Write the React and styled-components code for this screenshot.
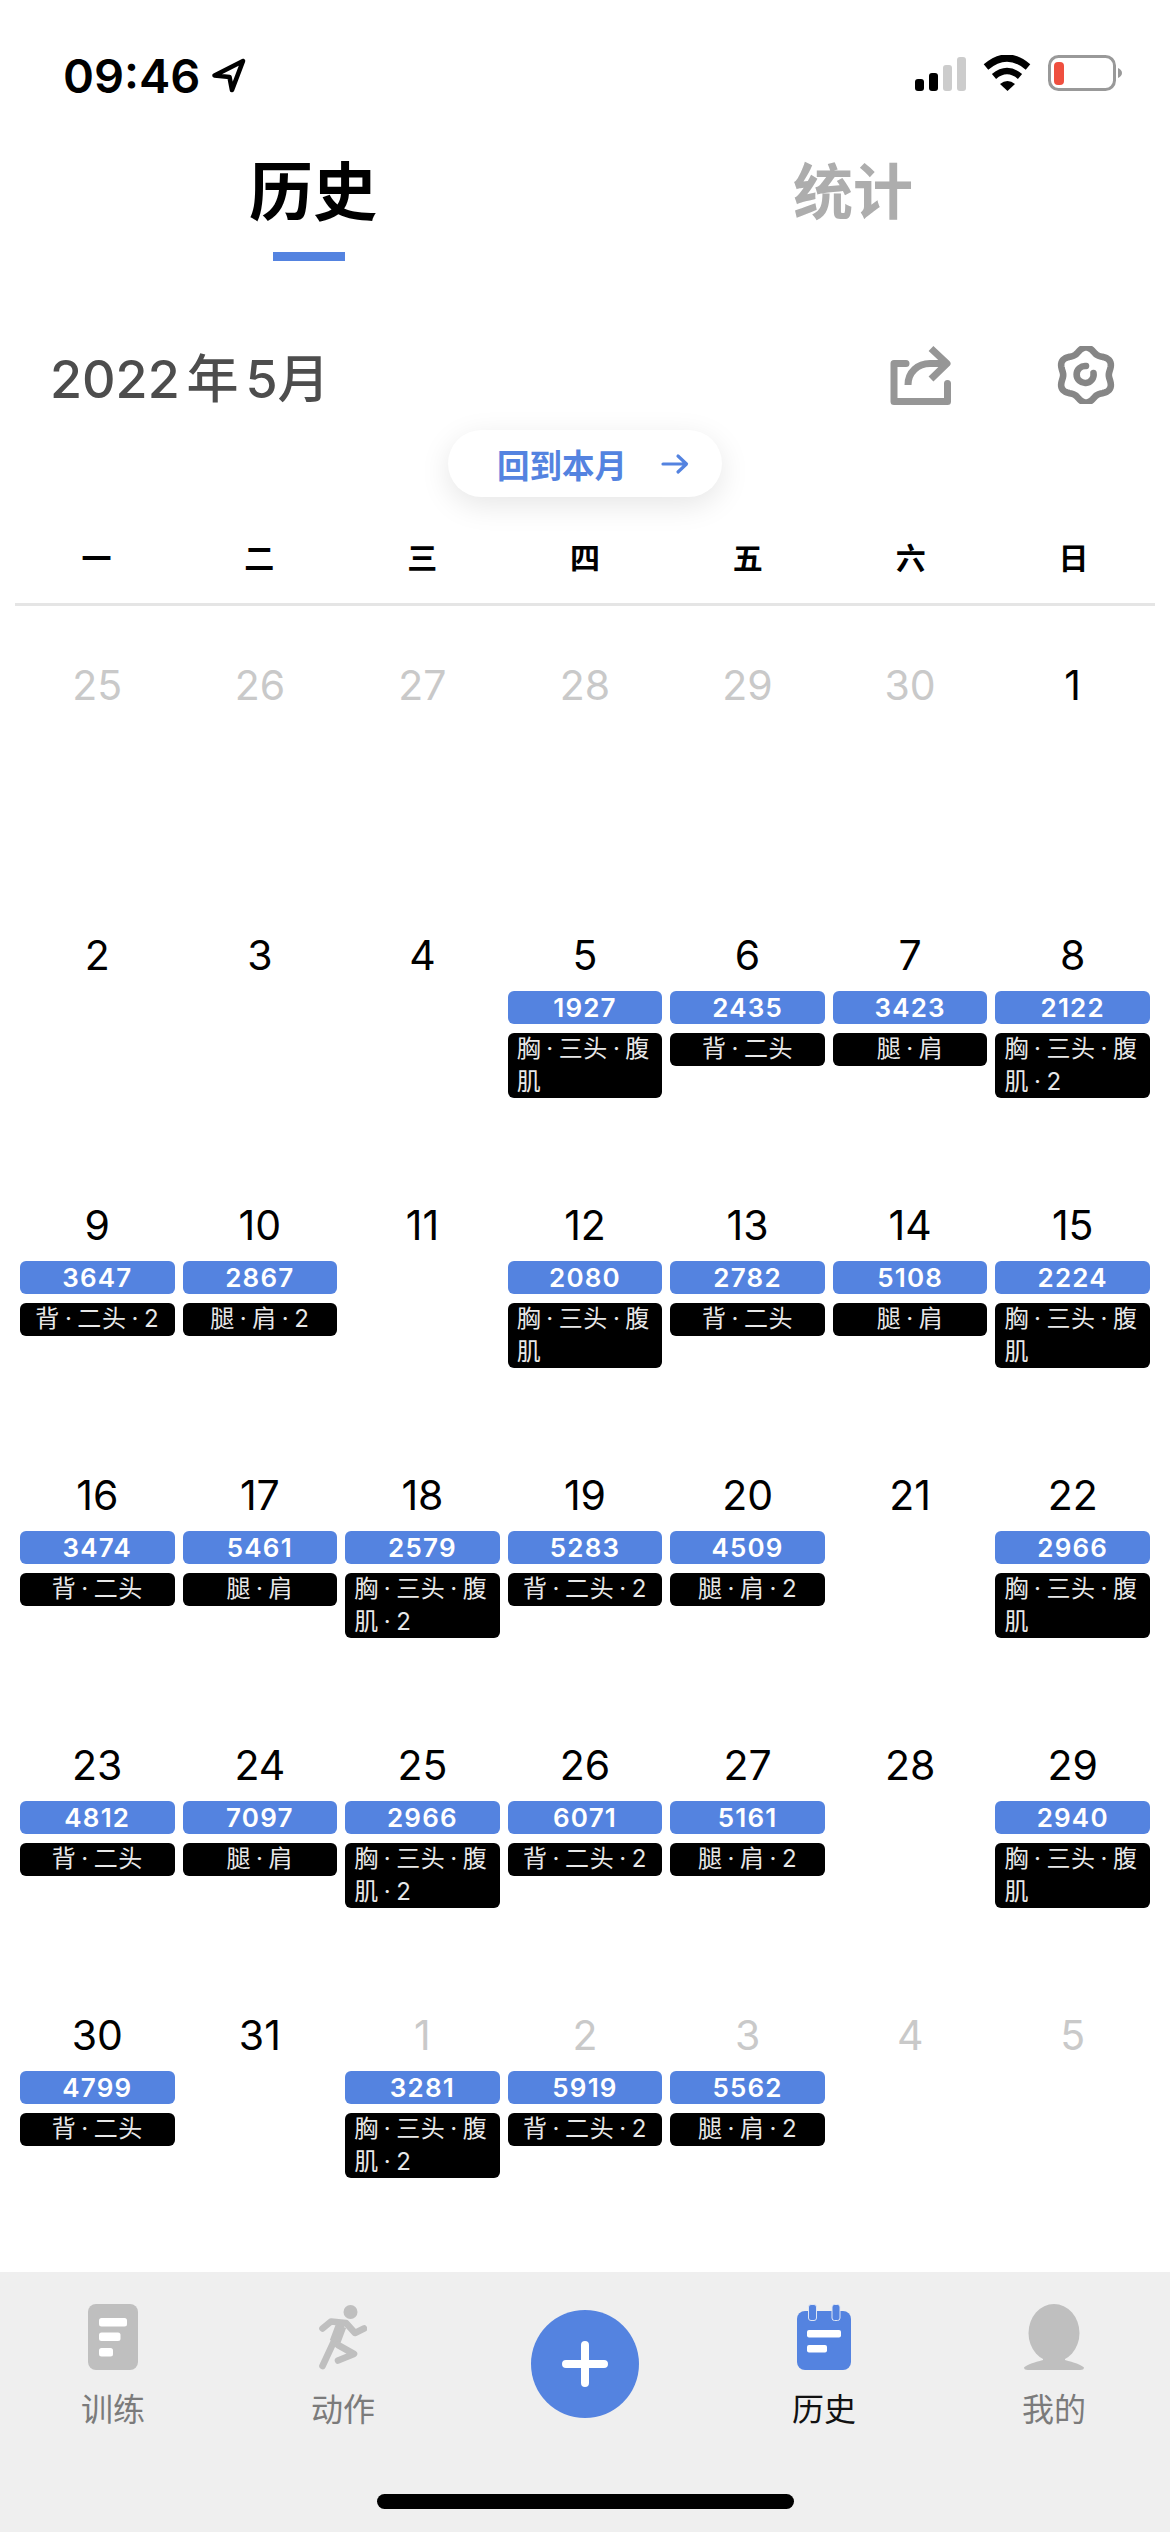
import React from 'react';
import styled, { createGlobalStyle } from 'styled-components';

const BLUE = '#5483e0';

const GlobalStyle = createGlobalStyle`
    html, body {
        margin: 0;
        padding: 0;
        background: #fff;
    }
    body {
        font-family: Inter, "Noto Sans CJK SC", sans-serif;
    }
`;

const CHEST = '胸\u2009·\u2009三头\u2009·\u2009腹肌';
const BACK = '背\u2009·\u2009二头';
const LEGS = '腿\u2009·\u2009肩';
const twice = (label) => `${label}\u2009·\u20092`;

const days = [
    { day: 25, muted: true }, { day: 26, muted: true }, { day: 27, muted: true }, { day: 28, muted: true },
    { day: 29, muted: true }, { day: 30, muted: true }, { day: 1 },
    { day: 2 }, { day: 3 }, { day: 4 },
    { day: 5, kcal: 1927, label: CHEST }, { day: 6, kcal: 2435, label: BACK }, { day: 7, kcal: 3423, label: LEGS },
    { day: 8, kcal: 2122, label: twice(CHEST) },
    { day: 9, kcal: 3647, label: twice(BACK) }, { day: 10, kcal: 2867, label: twice(LEGS) }, { day: 11 },
    { day: 12, kcal: 2080, label: CHEST }, { day: 13, kcal: 2782, label: BACK }, { day: 14, kcal: 5108, label: LEGS },
    { day: 15, kcal: 2224, label: CHEST },
    { day: 16, kcal: 3474, label: BACK }, { day: 17, kcal: 5461, label: LEGS }, { day: 18, kcal: 2579, label: twice(CHEST) },
    { day: 19, kcal: 5283, label: twice(BACK) }, { day: 20, kcal: 4509, label: twice(LEGS) }, { day: 21 },
    { day: 22, kcal: 2966, label: CHEST },
    { day: 23, kcal: 4812, label: BACK }, { day: 24, kcal: 7097, label: LEGS }, { day: 25, kcal: 2966, label: twice(CHEST) },
    { day: 26, kcal: 6071, label: twice(BACK) }, { day: 27, kcal: 5161, label: twice(LEGS) }, { day: 28 },
    { day: 29, kcal: 2940, label: CHEST },
    { day: 30, kcal: 4799, label: BACK }, { day: 31 },
    { day: 1, muted: true, kcal: 3281, label: twice(CHEST) }, { day: 2, muted: true, kcal: 5919, label: twice(BACK) },
    { day: 3, muted: true, kcal: 5562, label: twice(LEGS) }, { day: 4, muted: true }, { day: 5, muted: true },
];

const weekdays = ['一', '二', '三', '四', '五', '六', '日'];

// wavy circle for the settings gear
const gearPath = (() => {
    const points = [];
    for (let i = 0; i < 120; i++) {
        const a = (i / 120) * Math.PI * 2;
        const r = 25.2 + 2.4 * Math.cos(6 * a);
        points.push(`${(29 + r * Math.sin(a)).toFixed(2)},${(29 - r * Math.cos(a)).toFixed(2)}`);
    }
    return `M${points.join('L')}Z`;
})();

function App() {
    return (
        <Page>
            <GlobalStyle />
            <StatusBar>
                <Clock>
                    09:46
                    <svg width="36" height="36" viewBox="0 0 36 36" fill="none">
                        <path d="M32 4 L3.5 18.5 L18.5 20 L21 33 Z" stroke="#000" strokeWidth="4.6" strokeLinejoin="round" />
                    </svg>
                </Clock>
                <StatusIcons>
                    <svg width="51" height="34" viewBox="0 0 51 34">
                        <rect x="0" y="22" width="9" height="12" rx="3" fill="#000" />
                        <rect x="14" y="16" width="9" height="18" rx="3" fill="#000" />
                        <rect x="28" y="8" width="9" height="26" rx="3" fill="#ccc" />
                        <rect x="42" y="0" width="9" height="34" rx="3" fill="#ccc" />
                    </svg>
                    <svg width="48" height="36" viewBox="0 0 48 36" fill="none">
                        <path d="M3 12 Q24 -6 45 12" stroke="#000" strokeWidth="7" />
                        <path d="M11 21.5 Q24 10.5 37 21.5" stroke="#000" strokeWidth="6.5" />
                        <path d="M17 29 Q24.5 23 32 29 L24.5 36 Z" fill="#000" />
                    </svg>
                    <svg width="74" height="36" viewBox="0 0 74 36">
                        <rect x="1.5" y="1.5" width="65" height="33" rx="9" fill="none" stroke="#999" strokeWidth="3" />
                        <rect x="6" y="7" width="10" height="23" rx="4" fill="#ef4f3f" />
                        <path d="M70 13 Q74 15 74 18 Q74 21 70 23 Z" fill="#999" />
                    </svg>
                </StatusIcons>
            </StatusBar>

            <Tabs>
                <Tab>
                    <TabTitle $active>历史</TabTitle>
                    <TabLine />
                </Tab>
                <Tab>
                    <TabTitle>统计</TabTitle>
                </Tab>
            </Tabs>

            <MonthBar>
                <MonthTitle>2022 年 5月</MonthTitle>
                <MonthActions>
                    <svg width="62" height="62" viewBox="0 0 62 62" fill="none" stroke="#969696" strokeWidth="7" strokeLinecap="round" strokeLinejoin="round">
                        <path d="M16 19.5 H4 V57.5 H57.5 V39.5" />
                        <path d="M18 41 C18 28 28 19.5 40 19.5 H55" strokeLinecap="butt" />
                        <path d="M41 4.5 L57 19.5 L41 35" strokeLinecap="butt" />
                    </svg>
                    <svg width="58" height="58" viewBox="0 0 58 58" fill="none" stroke="#868686" strokeWidth="6.6" strokeLinecap="round">
                        <path d="M36.5 27 A8.5 8.5 0 1 1 29 20" />
                        <path d={gearPath} />
                    </svg>
                </MonthActions>
            </MonthBar>

            <BackPill>
                回到本月
                <svg width="28" height="22" viewBox="0 0 28 22" fill="none" stroke={BLUE} strokeWidth="3.2" strokeLinecap="round" strokeLinejoin="round">
                    <path d="M2 11 H25 M17 3 L25.5 11 L17 19" />
                </svg>
            </BackPill>

            <Weekdays>
                {weekdays.map((name) => (
                    <Weekday key={name}>{name}</Weekday>
                ))}
            </Weekdays>

            <Calendar>
                {days.map((item, i) => (
                    <Cell key={i}>
                        <DayNumber $muted={item.muted}>{item.day}</DayNumber>
                        {item.kcal && (
                            <>
                                <Kcal>{item.kcal}</Kcal>
                                <Muscles>
                                    <span>{item.label}</span>
                                </Muscles>
                            </>
                        )}
                    </Cell>
                ))}
            </Calendar>

            <TabBar>
                <TabItems>
                    <TabItem>
                        <TabIcon>
                            <svg width="50" height="66" viewBox="0 0 50 66">
                                <rect width="50" height="66" rx="8" fill="#bfbfbf" />
                                <rect x="11" y="14" width="28" height="8.5" rx="2.5" fill="#fff" />
                                <rect x="11" y="28.5" width="21.5" height="8.5" rx="2.5" fill="#fff" />
                                <rect x="11" y="44" width="14" height="8.5" rx="2.5" fill="#fff" />
                            </svg>
                        </TabIcon>
                        <TabLabel>训练</TabLabel>
                    </TabItem>
                    <TabItem>
                        <TabIcon>
                            <svg width="48" height="65" viewBox="22 14 48 65" fill="none" stroke="#bfbfbf" strokeWidth="6.6" strokeLinecap="round" strokeLinejoin="round">
                                <circle cx="53.5" cy="21" r="7" fill="#bfbfbf" stroke="none" />
                                <path d="M25.5 37.5 L34 30.5 L49 32 L58 42 L67 37.5" />
                                <path d="M45 33 L25.5 75" />
                                <path d="M44 35 L38 51" strokeWidth="11" strokeLinecap="butt" />
                                <path d="M41 54 L57 63 L41 69.5" />
                            </svg>
                        </TabIcon>
                        <TabLabel>动作</TabLabel>
                    </TabItem>
                    <TabItem>
                        <AddButton>
                            <svg width="46" height="46" viewBox="0 0 46 46" fill="none" stroke="#fff" strokeWidth="8" strokeLinecap="round">
                                <path d="M23 4 V42 M4 23 H42" />
                            </svg>
                        </AddButton>
                    </TabItem>
                    <TabItem>
                        <TabIcon>
                            <svg width="54" height="66" viewBox="0 0 54 66">
                                <rect y="7" width="54" height="59" rx="8" fill={BLUE} />
                                <rect x="11.5" y="0.5" width="8" height="16" rx="2.5" fill={BLUE} stroke="#dfe6f4" />
                                <rect x="35" y="0.5" width="8" height="16" rx="2.5" fill={BLUE} stroke="#dfe6f4" />
                                <rect x="10" y="26" width="34" height="7.5" rx="2" fill="#fff" />
                                <rect x="10" y="41" width="20" height="7.5" rx="2" fill="#fff" />
                            </svg>
                        </TabIcon>
                        <TabLabel $active>历史</TabLabel>
                    </TabItem>
                    <TabItem>
                        <TabIcon>
                            <svg width="60" height="66" viewBox="0 0 60 66" fill="#bfbfbf">
                                <ellipse cx="30" cy="29" rx="25.5" ry="29" />
                                <path d="M19 50 H41 L41 56 C50 58.5 57 60.5 60 63.5 Q60 66 56 66 H4 Q0 66 0 63.5 C3 60.5 10 58.5 19 56 Z" />
                            </svg>
                        </TabIcon>
                        <TabLabel>我的</TabLabel>
                    </TabItem>
                </TabItems>
                <HomeIndicator />
            </TabBar>
        </Page>
    );
}

const Page = styled.div`
    width: 1170px;
    height: 2532px;
    display: flex;
    flex-direction: column;
    overflow: hidden;
    background: #fff;
`;

const StatusBar = styled.div`
    height: 152px;
    box-sizing: border-box;
    padding: 50px 48px 0 63px;
    display: flex;
    justify-content: space-between;
    align-items: flex-start;
`;

const Clock = styled.div`
    display: flex;
    align-items: center;
    gap: 11px;
    height: 50px;
    font-size: 47px;
    font-weight: 600;
    color: #000;
`;

const StatusIcons = styled.div`
    display: flex;
    align-items: flex-end;
    gap: 17px;
    height: 41px;
`;

const Tabs = styled.div`
    display: grid;
    grid-template-columns: 1fr 1fr;
    padding: 0 47px 0 43px;
`;

const Tab = styled.div`
    display: flex;
    flex-direction: column;
    align-items: center;
`;

const TabTitle = styled.div`
    font-size: ${(props) => (props.$active ? '64px' : '60px')};
    line-height: 80px;
    font-weight: 700;
    color: ${(props) => (props.$active ? '#000' : '#adadad')};
`;

const TabLine = styled.div`
    width: 72px;
    height: 9px;
    margin: 20px 8px 0 0;
    background: ${BLUE};
`;

const MonthBar = styled.div`
    height: 62px;
    margin-top: 83px;
    padding: 0 55px 0 50px;
    display: flex;
    justify-content: space-between;
    align-items: center;
`;

const MonthTitle = styled.div`
    font-size: 52px;
    font-weight: 500;
    word-spacing: -7px;
    color: #4d4d4d;
`;

const MonthActions = styled.div`
    display: flex;
    align-items: center;
    gap: 105px;
`;

const BackPill = styled.div`
    align-self: center;
    width: 274px;
    height: 67px;
    margin-top: 24px;
    box-sizing: border-box;
    padding-left: 49px;
    display: flex;
    align-items: center;
    gap: 34px;
    border-radius: 34px;
    background: #fff;
    box-shadow: 0 8px 30px rgba(0, 0, 0, 0.1);
    font-size: 32.5px;
    font-weight: 600;
    color: ${BLUE};
`;

const Weekdays = styled.div`
    display: grid;
    grid-template-columns: repeat(7, 1fr);
    margin: 41px 15px 0;
    padding-bottom: 25px;
    border-bottom: 3px solid #e5e5e5;
`;

const Weekday = styled.div`
    text-align: center;
    font-size: 30px;
    line-height: 40px;
    font-weight: 700;
    color: #000;
`;

const Calendar = styled.div`
    height: 1615px;
    padding: 51px 16px 0;
    display: grid;
    grid-template-columns: repeat(7, 1fr);
    grid-auto-rows: 270px;
`;

const Cell = styled.div`
    display: flex;
    flex-direction: column;
    padding: 0 4px;
`;

const DayNumber = styled.div`
    height: 56px;
    margin-bottom: 8px;
    text-align: center;
    font-size: 41px;
    line-height: 56px;
    color: ${(props) => (props.$muted ? '#c9c9c9' : '#000')};
`;

const Kcal = styled.div`
    height: 33px;
    border-radius: 6px;
    background: ${BLUE};
    text-align: center;
    font-size: 26px;
    line-height: 33px;
    font-weight: 600;
    letter-spacing: 1.2px;
    color: #fff;
`;

const Muscles = styled.div`
    margin-top: 9px;
    padding: 0 9px;
    display: flex;
    justify-content: center;
    border-radius: 6px;
    background: #000;
    font-size: 24px;
    line-height: 32.5px;
    letter-spacing: 0.6px;
    color: #e8e8e8;
`;

const TabBar = styled.div`
    flex: 1;
    padding-top: 32px;
    background: #efefef;
`;

const TabItems = styled.div`
    display: grid;
    grid-template-columns: 226px 234px 250px 228px 232px;
    height: 126px;
`;

const TabItem = styled.div`
    display: flex;
    flex-direction: column;
    align-items: center;
`;

const TabIcon = styled.div`
    height: 66px;
    display: flex;
    align-items: center;
`;

const TabLabel = styled.div`
    margin-top: 20px;
    font-size: 32px;
    line-height: 40px;
    color: ${(props) => (props.$active ? '#111' : '#7b7b7b')};
`;

const AddButton = styled.div`
    width: 108px;
    height: 108px;
    margin-top: 6px;
    display: flex;
    align-items: center;
    justify-content: center;
    border-radius: 50%;
    background: ${BLUE};
`;

const HomeIndicator = styled.div`
    width: 417px;
    height: 15px;
    margin: 64px auto 0;
    border-radius: 8px;
    background: #000;
`;

export default App;
